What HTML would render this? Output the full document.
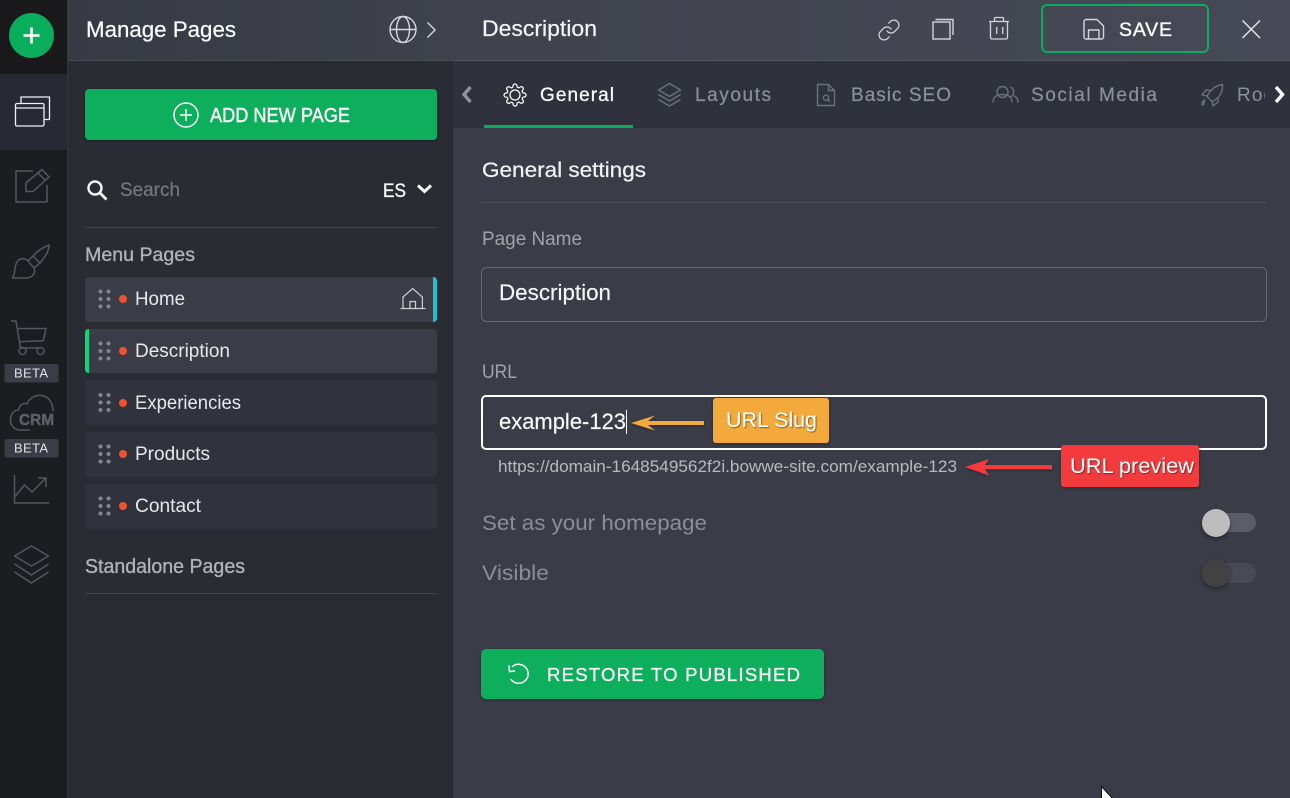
<!DOCTYPE html>
<html><head><meta charset="utf-8"><title>Manage Pages</title>
<style>
html,body{margin:0;padding:0;background:#3a3d48;width:1290px;height:798px;overflow:hidden}
svg{display:block}
text{font-family:"Liberation Sans",sans-serif}
</style></head><body>
<svg xmlns="http://www.w3.org/2000/svg" width="1290" height="798" viewBox="0 0 1290 798">
<defs>
<linearGradient id="h1" x1="0" x2="1" y1="0" y2="0"><stop offset="0" stop-color="#373a44"/><stop offset="1" stop-color="#3f424d"/></linearGradient>
<linearGradient id="h2" x1="0" x2="1" y1="0" y2="0"><stop offset="0" stop-color="#3f424d"/><stop offset="1" stop-color="#474a56"/></linearGradient>
<filter id="sh" x="-20%" y="-20%" width="140%" height="150%"><feDropShadow dx="0" dy="1" stdDeviation="1.5" flood-color="#000" flood-opacity=".35"/></filter>
<filter id="ks" x="-50%" y="-50%" width="200%" height="200%"><feDropShadow dx="0" dy="2" stdDeviation="2.5" flood-color="#000" flood-opacity=".4"/></filter>
<filter id="ts" x="-5%" y="-20%" width="110%" height="150%"><feDropShadow dx="1" dy="1" stdDeviation=".4" flood-color="#000" flood-opacity=".45"/></filter>
<clipPath id="tabclip"><rect x="1195" y="61" width="70" height="67"/></clipPath>
</defs>

<!-- backgrounds -->
<rect width="1290" height="798" fill="#3a3d48"/>
<rect x="0" y="0" width="67" height="798" fill="#1c1d20"/>
<rect x="0" y="0" width="67" height="74" fill="#19191b"/>
<rect x="0" y="74" width="67" height="76" fill="#272a35"/>
<rect x="67" y="0" width="1" height="798" fill="#35373e"/>
<rect x="68" y="0" width="385" height="798" fill="#2a2c34"/>
<rect x="68" y="0" width="385" height="60" fill="url(#h1)"/>
<rect x="68" y="60" width="385" height="1" fill="#494b55"/>
<rect x="453" y="0" width="837" height="60" fill="url(#h2)"/>
<rect x="453" y="60" width="837" height="1" fill="#53555f"/>
<rect x="453" y="61" width="837" height="67" fill="#2f323c"/>

<!-- rail -->
<circle cx="31.500" cy="35.500" r="22.500" fill="#08ae5c"/>
<path d="M31.500 27.500v16M23.500 35.500h16" stroke="#fff" stroke-width="2.600" fill="none"/>
<g fill="none" stroke="#f0f0f2" stroke-width="1.300">
<rect x="15.500" y="103.500" width="28.500" height="22.500" rx="1.500"/>
<path d="M15.500 108h28.500"/>
<path d="M21 103V97h28.500V119.500H44"/>
</g>
<g fill="none" stroke="#55575e" stroke-width="1.500" stroke-linejoin="round">
<path d="M33 171H16v31h31V185"/>
<path d="M26 183l16-13.500 7 7.500-16 14.500h-7z"/>
<path d="M38 173l7.500 7.500"/>
</g>
<g fill="none" stroke="#55575e" stroke-width="1.500" stroke-linejoin="round">
<path d="M12.500 278C15 275 14.500 268 16 264 18 258 24 257 28 261L34 268C36 272 33 278 26 278Z"/>
<path d="M28 261L33 256 40 263 34 268"/>
<path d="M33 256C38 250 44 247 49 245 49 252 44 258 40 263"/>
</g>
<g fill="none" stroke="#55575e" stroke-width="1.500" stroke-linejoin="round">
<path d="M11 321h5l4.500 27H40"/>
<path d="M17.500 328.500H46l-2.700 12.300-24 .9"/>
<circle cx="22.500" cy="351" r="3.500"/><circle cx="40.500" cy="351" r="3.500"/>
</g>
<rect x="4.500" y="364" width="54" height="18.500" rx="2" fill="#3a3d48"/>
<text x="14" y="377.500" font-size="13" fill="#e4e4e6" textLength="34" lengthAdjust="spacing">BETA</text>
<path d="M30 430H20C14 430 10.500 425 10.500 420 10.500 414 14 410 18.500 410 20 403 25 403 27 404 30 397 36 395 41 395.500 48 396 53 402 53 411" fill="none" stroke="#55575e" stroke-width="1.500"/>
<text x="19" y="425" font-size="16" font-weight="700" fill="#5d5f67" stroke="#5d5f67" stroke-width=".5" textLength="35" lengthAdjust="spacingAndGlyphs">CRM</text>
<rect x="4.500" y="439" width="54" height="18.500" rx="2" fill="#3a3d48"/>
<text x="14" y="452.500" font-size="13" fill="#e4e4e6" textLength="34" lengthAdjust="spacing">BETA</text>
<g fill="none" stroke="#55575e" stroke-width="1.500">
<path d="M14.500 475v28H49"/>
<path d="M14.500 497l10-12 7.500 7 14-14"/>
<path d="M38 478h8v9"/>
</g>
<g fill="none" stroke="#55575e" stroke-width="1.400" stroke-linejoin="round">
<path d="M31.500 546l17 10-17 10-17-10z"/>
<path d="M14.500 564l17 11 17-11"/>
<path d="M14.500 572l17 11 17-11"/>
</g>

<!-- panel header -->
<text x="86" y="37" font-size="22" fill="#fff" stroke="#fff" stroke-width=".2" textLength="150" lengthAdjust="spacingAndGlyphs">Manage Pages</text>
<g fill="none" stroke="#d8d8dc" stroke-width="1.400">
<circle cx="403" cy="29.500" r="13"/>
<ellipse cx="403" cy="29.500" rx="6.500" ry="13"/>
<path d="M390 29.500h26"/>
<path d="M427.500 22.500l7.500 7.500-7.500 7.500"/>
</g>

<!-- add button -->
<rect x="85" y="89" width="352" height="51" rx="4" fill="#08ae5c" filter="url(#sh)"/>
<circle cx="186" cy="115" r="12" fill="none" stroke="#fff" stroke-width="1.400"/>
<path d="M186 109v12M180 115h12" stroke="#fff" stroke-width="1.400"/>
<text x="210" y="122" font-size="20" fill="#fff" stroke="#fff" stroke-width=".4" textLength="140" lengthAdjust="spacingAndGlyphs">ADD NEW PAGE</text>

<!-- search -->
<circle cx="95" cy="188" r="6.500" fill="none" stroke="#f5f5f5" stroke-width="2.400"/>
<path d="M100 193l6.500 6.500" stroke="#f5f5f5" stroke-width="2.800"/>
<text x="120" y="196" font-size="19.500" fill="#77787e" stroke="#77787e" stroke-width=".2" textLength="60" lengthAdjust="spacingAndGlyphs">Search</text>
<text x="383" y="197" font-size="19.500" fill="#fff" stroke="#fff" stroke-width=".3" textLength="23" lengthAdjust="spacingAndGlyphs">ES</text>
<path d="M418 185.500l6.500 6 6.500-6" fill="none" stroke="#fff" stroke-width="3"/>
<rect x="85" y="227" width="352" height="1" fill="#44464f"/>
<text x="85" y="261" font-size="19.500" fill="#b2b3b7" stroke="#b2b3b7" stroke-width=".35" textLength="110" lengthAdjust="spacingAndGlyphs">Menu Pages</text>

<!-- items -->
<rect x="85" y="277" width="352" height="45" rx="4" fill="#3a3d48"/>
<path d="M433 277h.500a3.500 3.500 0 0 1 3.500 3.500v38a3.500 3.500 0 0 1-3.500 3.500H433z" fill="#22bfd0"/>
<rect x="85" y="329" width="352" height="44" rx="4" fill="#3a3d48"/>
<path d="M89 329h-.500a3.500 3.500 0 0 0-3.500 3.500v37a3.500 3.500 0 0 0 3.500 3.500H89z" fill="#0cd67c"/>
<rect x="85" y="380" width="352" height="45" rx="4" fill="#30333d"/>
<rect x="85" y="432" width="352" height="45" rx="4" fill="#30333d"/>
<rect x="85" y="484" width="352" height="45" rx="4" fill="#30333d"/>

<g fill="#84868e">
<circle cx="100.500" cy="291.500" r="2"/><circle cx="108.500" cy="291.500" r="2"/><circle cx="100.500" cy="299" r="2"/><circle cx="108.500" cy="299" r="2"/><circle cx="100.500" cy="306.500" r="2"/><circle cx="108.500" cy="306.500" r="2"/>
<circle cx="100.500" cy="343.500" r="2"/><circle cx="108.500" cy="343.500" r="2"/><circle cx="100.500" cy="351" r="2"/><circle cx="108.500" cy="351" r="2"/><circle cx="100.500" cy="358.500" r="2"/><circle cx="108.500" cy="358.500" r="2"/>
<circle cx="100.500" cy="395" r="2"/><circle cx="108.500" cy="395" r="2"/><circle cx="100.500" cy="402.500" r="2"/><circle cx="108.500" cy="402.500" r="2"/><circle cx="100.500" cy="410" r="2"/><circle cx="108.500" cy="410" r="2"/>
<circle cx="100.500" cy="446.500" r="2"/><circle cx="108.500" cy="446.500" r="2"/><circle cx="100.500" cy="454" r="2"/><circle cx="108.500" cy="454" r="2"/><circle cx="100.500" cy="461.500" r="2"/><circle cx="108.500" cy="461.500" r="2"/>
<circle cx="100.500" cy="498.500" r="2"/><circle cx="108.500" cy="498.500" r="2"/><circle cx="100.500" cy="506" r="2"/><circle cx="108.500" cy="506" r="2"/><circle cx="100.500" cy="513.500" r="2"/><circle cx="108.500" cy="513.500" r="2"/>
</g>
<g fill="#f0522f">
<circle cx="123" cy="299" r="4"/><circle cx="123" cy="351" r="4"/><circle cx="123" cy="403" r="4"/><circle cx="123" cy="454" r="4"/><circle cx="123" cy="506" r="4"/>
</g>
<g font-size="19" fill="#e8e8ea">
<text x="135" y="305" textLength="50" lengthAdjust="spacingAndGlyphs">Home</text>
<text x="135" y="357" textLength="95" lengthAdjust="spacingAndGlyphs">Description</text>
<text x="135" y="409" textLength="106" lengthAdjust="spacingAndGlyphs">Experiencies</text>
<text x="135" y="460" textLength="75" lengthAdjust="spacingAndGlyphs">Products</text>
<text x="135" y="512" textLength="66" lengthAdjust="spacingAndGlyphs">Contact</text>
</g>
<g fill="none" stroke="#cfd0d4" stroke-width="1.200">
<path d="M400.500 308.500h25"/>
<path d="M403 308v-11l9.700-8.500 9.700 8.500v11"/>
<path d="M410 308v-6.500h5.500v6.500"/>
</g>
<text x="85" y="573" font-size="20" fill="#b2b3b7" stroke="#b2b3b7" stroke-width=".35" textLength="160" lengthAdjust="spacingAndGlyphs">Standalone Pages</text>
<rect x="85" y="593" width="352" height="1" fill="#44464f"/>

<!-- main header -->
<text x="482" y="36" font-size="22" fill="#f4f4f5" stroke="#f4f4f5" stroke-width=".2" textLength="115" lengthAdjust="spacingAndGlyphs">Description</text>
<g fill="none" stroke="#d4d5d9" stroke-width="1.250" stroke-linecap="round" stroke-linejoin="round" transform="translate(877 18)">
<path d="M10 13a5 5 0 0 0 7.540.54l3-3a5 5 0 0 0-7.070-7.070l-1.720 1.710"/>
<path d="M14 11a5 5 0 0 0-7.540-.54l-3 3a5 5 0 0 0 7.070 7.070l1.710-1.710"/>
</g>
<g fill="none" stroke="#d4d5d9" stroke-width="1.400">
<rect x="933" y="22" width="17" height="17"/>
<path d="M935.500 19.500H953V35"/>
</g>
<g fill="none" stroke="#d4d5d9" stroke-width="1.300" stroke-linejoin="round">
<path d="M990.500 22v15.500a1.500 1.500 0 0 0 1.500 1.500h14a1.500 1.500 0 0 0 1.500-1.500V22"/>
<path d="M989 21.500h20"/>
<path d="M994.500 21v-2.500a1 1 0 0 1 1-1h7a1 1 0 0 1 1 1V21"/>
<path d="M996.700 27v7M1002.700 27v7"/>
</g>
<rect x="1042" y="5" width="166" height="47" rx="5" fill="none" stroke="#08ae5c" stroke-width="2"/>
<g fill="none" stroke="#d4d5d9" stroke-width="1.400" stroke-linejoin="round">
<path d="M1084 21.500a2 2 0 0 1 2-2h11l6.500 6.500V37a2 2 0 0 1-2 2H1086a2 2 0 0 1-2-2z"/>
<path d="M1088.500 39v-9h10.500v9"/>
</g>
<text x="1119" y="36" font-size="19.500" fill="#fff" stroke="#fff" stroke-width=".35" textLength="53" lengthAdjust="spacing">SAVE</text>
<path d="M1242.500 20.500l17.500 17.500M1260 20.500l-17.500 17.500" stroke="#e4e4e6" stroke-width="1.500" fill="none"/>

<!-- tabs -->
<path d="M470.500 87l-6.500 7.500 6.500 7.500" fill="none" stroke="#8f939d" stroke-width="3.400"/>
<g fill="none" stroke="#fff" stroke-width="1.250" stroke-linejoin="round" transform="translate(503 83)">
<path d="M19.400 15a1.650 1.650 0 0 0 .33 1.820l.06.06a2 2 0 0 1 0 2.830 2 2 0 0 1-2.830 0l-.06-.06a1.650 1.650 0 0 0-1.820-.33 1.650 1.650 0 0 0-1 1.510V21a2 2 0 0 1-2 2 2 2 0 0 1-2-2v-.09A1.650 1.650 0 0 0 9 19.400a1.650 1.650 0 0 0-1.820.33l-.06.06a2 2 0 0 1-2.830 0 2 2 0 0 1 0-2.830l.06-.06a1.650 1.650 0 0 0 .33-1.820 1.650 1.650 0 0 0-1.510-1H3a2 2 0 0 1-2-2 2 2 0 0 1 2-2h.09A1.650 1.650 0 0 0 4.600 9a1.650 1.650 0 0 0-.33-1.820l-.06-.06a2 2 0 0 1 0-2.830 2 2 0 0 1 2.830 0l.06.06a1.650 1.650 0 0 0 1.820.33H9a1.650 1.650 0 0 0 1-1.510V3a2 2 0 0 1 2-2 2 2 0 0 1 2 2v.09a1.650 1.650 0 0 0 1 1.510 1.650 1.650 0 0 0 1.820-.33l.06-.06a2 2 0 0 1 2.830 0 2 2 0 0 1 0 2.830l-.06.06a1.650 1.650 0 0 0-.33 1.820V9a1.650 1.650 0 0 0 1.510 1H21a2 2 0 0 1 2 2 2 2 0 0 1-2 2h-.09a1.650 1.650 0 0 0-1.510 1z"/>
<circle cx="12" cy="12" r="5"/>
</g>
<text x="540" y="101" font-size="19" fill="#fff" stroke="#fff" stroke-width=".25" textLength="74" lengthAdjust="spacing">General</text>
<rect x="484" y="125" width="149" height="3" fill="#08ae5c"/>
<g fill="none" stroke="#6b7079" stroke-width="1.400" stroke-linejoin="round">
<path d="M669.500 83.500l11 6.500-11 6.500-11-6.500z"/>
<path d="M658.500 94.500l11 6.500 11-6.500"/>
<path d="M658.500 99.500l11 6.500 11-6.500"/>
</g>
<text x="695" y="101" font-size="19" fill="#8c919b" stroke="#8c919b" stroke-width=".2" textLength="76" lengthAdjust="spacing">Layouts</text>
<g fill="none" stroke="#6b7079" stroke-width="1.400" stroke-linejoin="round">
<path d="M817.500 84.500h11l6 6v15h-17z"/>
<path d="M828.500 84.500v6h6"/>
<circle cx="826" cy="97.700" r="2.600"/><path d="M828 99.700l2 2"/>
</g>
<text x="851" y="101" font-size="19" fill="#8c919b" stroke="#8c919b" stroke-width=".2" textLength="100" lengthAdjust="spacing">Basic SEO</text>
<g fill="none" stroke="#6b7079" stroke-width="1.400">
<circle cx="1002.500" cy="92" r="5.500"/>
<path d="M993 102.500c0-5.500 4-8 9.500-8s9.500 2.500 9.500 8"/>
<path d="M1010.500 87a5.500 5.500 0 0 1 0 10"/>
<path d="M1014 96c2.500 1 4 3 4 6.500"/>
</g>
<text x="1031" y="101" font-size="19" fill="#8c919b" stroke="#8c919b" stroke-width=".2" textLength="126" lengthAdjust="spacing">Social Media</text>
<g fill="none" stroke="#6b7079" stroke-width="1.400" stroke-linejoin="round">
<path d="M1222.500 84.500c-7 1-12 5-15.500 12l5 5c7-3 11-9 10.500-17z"/>
<path d="M1207 96l-5-1 4-5 5 .5"/>
<path d="M1212 101l1 5 5-4v-5"/>
<path d="M1204 104l-2 1 .5-3 2-2z"/>
</g>
<g clip-path="url(#tabclip)"><text x="1237" y="101" font-size="19" fill="#8c919b" letter-spacing="1.100">Roc</text></g>
<path d="M1276 87l6.500 7.500-6.500 7.500" fill="none" stroke="#fff" stroke-width="3.400"/>

<!-- form -->
<text x="482" y="177" font-size="21.500" fill="#f2f2f3" stroke="#f2f2f3" stroke-width=".25" textLength="164" lengthAdjust="spacingAndGlyphs">General settings</text>
<rect x="481" y="202" width="786" height="1" fill="#4e515b"/>
<text x="482" y="245" font-size="19" fill="#a1a3a9" textLength="100" lengthAdjust="spacingAndGlyphs">Page Name</text>
<rect x="481.500" y="267.500" width="785" height="54" rx="5" fill="none" stroke="#686a73"/>
<text x="499" y="300" font-size="22" fill="#f7f7f8" stroke="#f7f7f8" stroke-width=".15" textLength="112" lengthAdjust="spacingAndGlyphs">Description</text>
<text x="482" y="378" font-size="19" fill="#a1a3a9" textLength="35" lengthAdjust="spacingAndGlyphs">URL</text>
<rect x="482" y="396" width="784" height="53" rx="4" fill="none" stroke="#fff" stroke-width="2"/>
<text x="499" y="429" font-size="22" fill="#fff" stroke="#fff" stroke-width=".15" textLength="127" lengthAdjust="spacingAndGlyphs">example-123</text>
<rect x="626" y="410" width="1" height="24" fill="#fff"/>
<path d="M631 423l24-7.500-7 5.500h56v4h-56l7 5.500z" fill="#f3a93a" filter="url(#sh)"/>
<rect x="713" y="398" width="116" height="45" rx="3" fill="#f3a93a" filter="url(#sh)"/>
<text x="726" y="427" font-size="21" fill="#fff" filter="url(#ts)" textLength="91" lengthAdjust="spacingAndGlyphs">URL Slug</text>
<text x="498" y="472" font-size="16.500" fill="#b8babe" textLength="459" lengthAdjust="spacingAndGlyphs">https://domain-1648549562f2i.bowwe-site.com/example-123</text>
<path d="M965 467l24-8-4 6h67v4.300h-67l4 6.200z" fill="#f33b3d" filter="url(#sh)"/>
<rect x="1061" y="445" width="138" height="42" rx="3" fill="#f33b3d" filter="url(#sh)"/>
<text x="1070" y="473" font-size="21" fill="#fff" filter="url(#ts)" textLength="124" lengthAdjust="spacingAndGlyphs">URL preview</text>
<text x="482" y="530" font-size="21" fill="#8c8e96" textLength="225" lengthAdjust="spacingAndGlyphs">Set as your homepage</text>
<text x="482" y="580" font-size="21" fill="#8c8e96" textLength="67" lengthAdjust="spacingAndGlyphs">Visible</text>
<rect x="1205" y="513" width="51" height="19" rx="9.500" fill="#5b5d68"/>
<circle cx="1216" cy="523" r="14" fill="#bdbdbd" filter="url(#ks)"/>
<rect x="1205" y="563" width="51" height="20" rx="10" fill="#484a55"/>
<circle cx="1216" cy="573" r="14" fill="#424242" filter="url(#ks)"/>

<!-- restore -->
<rect x="481" y="649" width="343" height="50" rx="5" fill="#08ae5c" filter="url(#sh)"/>
<g fill="none" stroke="#fff" stroke-width="1.500">
<path d="M512.500 666.500a9.500 9.500 0 1 1-1.500 13" stroke-linecap="round"/>
<path d="M509 665.500l.5 6 5.500-.5"/>
</g>
<text x="547" y="681" font-size="18.500" fill="#fff" stroke="#fff" stroke-width=".3" textLength="253" lengthAdjust="spacing">RESTORE TO PUBLISHED</text>

<!-- cursor -->
<path d="M1101.500 786.500v12h11z" fill="#fff" stroke="#111" stroke-width="1"/>
</svg>
</body></html>
